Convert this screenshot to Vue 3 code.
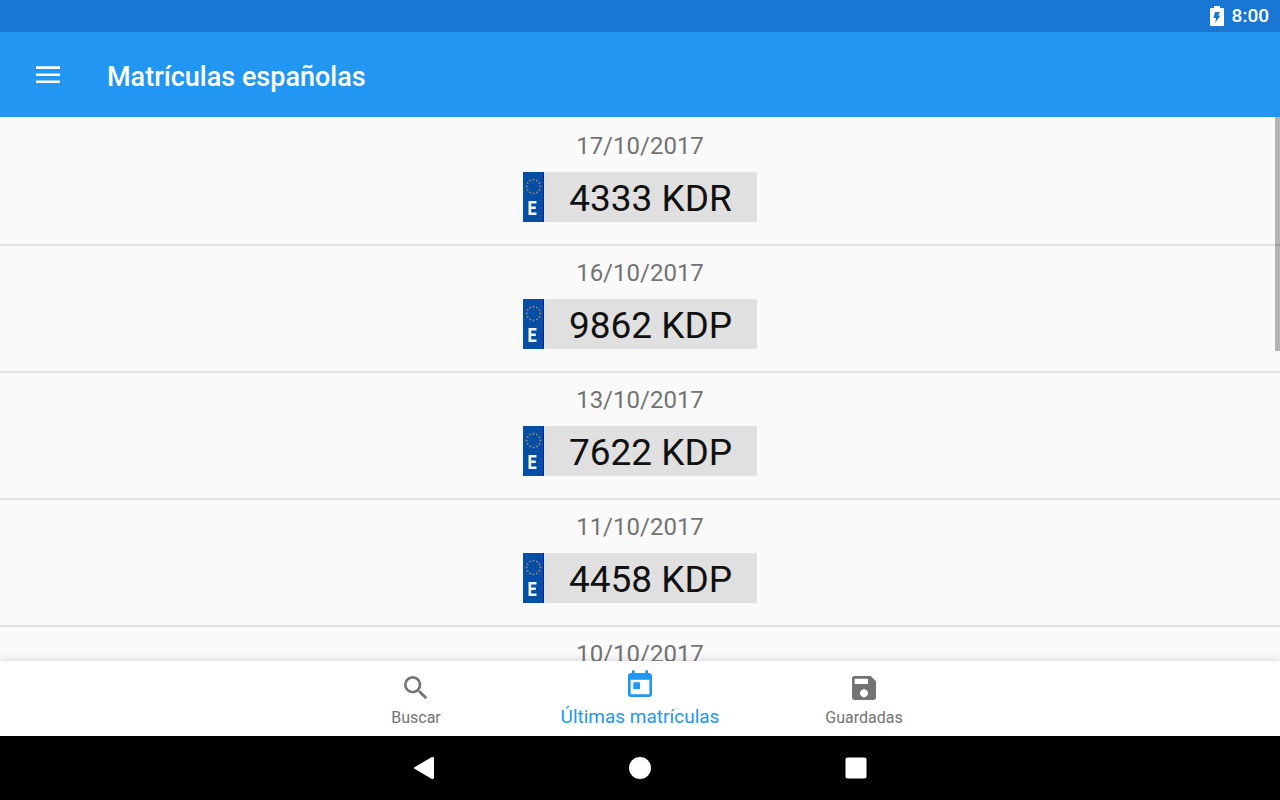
<script setup>
const plates = [
  { date: '17/10/2017', number: '4333 KDR' },
  { date: '16/10/2017', number: '9862 KDP' },
  { date: '13/10/2017', number: '7622 KDP' },
  { date: '11/10/2017', number: '4458 KDP' },
  { date: '10/10/2017', number: '' },
]

// Twelve stars evenly placed on the EU ring
const stars = Array.from({ length: 12 }, (_, i) => {
  const angle = (i * Math.PI) / 6
  return { x: 10.5 + 6.8 * Math.sin(angle), y: 14.5 - 6.8 * Math.cos(angle) }
})
</script>

<template>
  <div class="screen">
    <div class="status">
      <svg class="battery" width="14" height="20" viewBox="0 0 14 20" aria-hidden="true">
        <path fill="#fff" fill-rule="evenodd" d="M4 0h6v2h3q1 0 1 1v16q0 1-1 1H1q-1 0-1-1V3q0-1 1-1h3zM5 6L3.500 12h2.700L5 17L10.500 9.500H8L10 6z" />
      </svg>
      <span class="clock">8:00</span>
    </div>

    <header class="toolbar">
      <button class="menu" type="button" aria-label="Menú">
        <svg width="24" height="18" viewBox="0 0 24 18" aria-hidden="true">
          <path fill="#fff" d="M0 .3h24v2.700H0zM0 7.400h24v2.700H0zM0 14.400h24v2.700H0z" />
        </svg>
      </button>
      <h1 class="title">Matrículas españolas</h1>
    </header>

    <main class="content">
      <ul class="list">
        <li v-for="plate in plates" :key="plate.date" class="row">
          <time class="date">{{ plate.date }}</time>
          <div v-if="plate.number" class="plate">
            <svg class="band" width="21" height="50" viewBox="0 0 21 50" aria-hidden="true">
              <rect width="21" height="50" fill="#064ea4" />
              <rect x="20" width="1" height="50" fill="#0420a4" />
              <circle v-for="(star, i) in stars" :key="i" :cx="star.x" :cy="star.y" r="0.9" fill="#a08c68" />
              <path fill="#eef3fa" d="M5.500 29h8v2.400H8.200v3.200h4.600v2.400H8.200v3.600h5.300V43h-8z" />
            </svg>
            <span class="number">{{ plate.number }}</span>
          </div>
        </li>
      </ul>
      <div class="thumb"></div>
    </main>

    <nav class="tabs">
      <button class="tab" type="button">
        <svg width="32" height="32" viewBox="0 0 24 24" aria-hidden="true">
          <path fill="currentColor" d="M15.500 14h-.790l-.280-.270A6.470 6.470 0 0 0 16 9.500 6.500 6.500 0 1 0 9.500 16c1.610 0 3.090-.590 4.230-1.570l.270.280v.790l5 4.990L20.490 19zm-6 0C7.010 14 5 11.990 5 9.500S7.010 5 9.500 5 14 7.010 14 9.500 11.990 14 9.500 14z" />
        </svg>
        <span class="label">Buscar</span>
      </button>
      <button class="tab active" type="button" aria-current="page">
        <svg width="32" height="32" viewBox="0 0 24 24" aria-hidden="true">
          <path fill="currentColor" d="M19 3h-1V1h-2v2H8V1H6v2H5c-1.110 0-1.990.900-1.990 2L3 19a2 2 0 0 0 2 2h14c1.100 0 2-.900 2-2V5c0-1.100-.900-2-2-2zm0 16H5V8h14zM7 10h5v5H7z" />
        </svg>
        <span class="label">Últimas matrículas</span>
      </button>
      <button class="tab" type="button">
        <svg width="32" height="32" viewBox="0 0 24 24" aria-hidden="true">
          <path fill="currentColor" d="M17 3H5a2 2 0 0 0-2 2v14a2 2 0 0 0 2 2h14c1.100 0 2-.900 2-2V7zm-5 16c-1.660 0-3-1.340-3-3s1.340-3 3-3 3 1.340 3 3-1.340 3-3 3zm3-10H5V5h10z" />
        </svg>
        <span class="label">Guardadas</span>
      </button>
    </nav>

    <div class="system">
      <button class="key" type="button" aria-label="Atrás">
        <svg width="22" height="22" viewBox="0 0 22 22" aria-hidden="true">
          <path fill="#fff" d="M1.800 10Q.2 11 1.800 12L18.500 21.700Q21 22.500 21 20.500V1.500Q21-.5 18.500.3z" />
        </svg>
      </button>
      <button class="key" type="button" aria-label="Inicio">
        <svg width="22" height="22" viewBox="0 0 22 22" aria-hidden="true">
          <circle cx="11" cy="11" r="11" fill="#fff" />
        </svg>
      </button>
      <button class="key" type="button" aria-label="Recientes">
        <svg width="22" height="22" viewBox="0 0 22 22" aria-hidden="true">
          <rect x=".5" y=".5" width="21" height="21" rx="2" fill="#fff" />
        </svg>
      </button>
    </div>
  </div>
</template>

<style>
body {
  margin: 0;
}
</style>

<style scoped>
.screen {
  display: flex;
  flex-direction: column;
  height: 100vh;
  font-family: Roboto, "Noto Sans", sans-serif;
  background: #fafafa;
}

button {
  padding: 0;
  border: 0;
  background: none;
  font: inherit;
  color: inherit;
}

svg {
  display: block;
}

.status {
  display: flex;
  flex: none;
  align-items: center;
  justify-content: flex-end;
  gap: 8px;
  height: 32px;
  padding-right: 11px;
  background: #1976d2;
  color: #fff;
}

.clock {
  font-size: 19px;
  font-weight: 500;
  line-height: 34px;
}

.toolbar {
  display: flex;
  flex: none;
  align-items: center;
  gap: 23px;
  height: 85px;
  padding: 0 12px;
  background: #2196f3;
  color: #fff;
}

.menu {
  display: grid;
  place-items: center;
  width: 72px;
  height: 72px;
}

.title {
  margin: 0;
  padding-top: 4px;
  font-size: 27px;
  font-weight: 500;
  line-height: 36px;
}

.content {
  position: relative;
  flex: 1;
  min-height: 0;
  overflow: hidden;
}

.list {
  margin: 0;
  padding: 2px 0 0;
  list-style: none;
}

.row {
  display: flex;
  flex-direction: column;
  align-items: center;
  gap: 9px;
  padding: 11px 0 22px;
  border-bottom: 2px solid #e0e0e0;
}

.date {
  font-size: 24px;
  line-height: 33px;
  color: #737373;
}

.plate {
  display: flex;
  align-items: stretch;
  min-width: 234px;
  height: 50px;
  background: #e0e0e0;
}

.band {
  flex: none;
}

.number {
  flex: 1;
  text-align: center;
  font-size: 37px;
  line-height: 54px;
  color: #111;
}

.thumb {
  position: absolute;
  top: 0;
  right: 0;
  width: 5px;
  height: 43%;
  background: rgba(0, 0, 0, 0.28);
}

.tabs {
  position: relative;
  display: flex;
  flex: none;
  justify-content: center;
  height: 75px;
  background: #fff;
  box-shadow: 0 0 8px rgba(0, 0, 0, 0.18);
  color: #737373;
}

.tab {
  display: flex;
  flex-direction: column;
  align-items: center;
  width: 224px;
  padding-top: 11px;
  font-size: 16px;
}

.label {
  line-height: 28px;
}

.active {
  padding-top: 8px;
  color: #2196f3;
  font-size: 19px;
}

.active .label {
  line-height: 32px;
}

.system {
  display: flex;
  flex: none;
  justify-content: center;
  height: 64px;
  background: #000;
}

.key {
  display: grid;
  place-items: center;
  width: 216px;
}
</style>
